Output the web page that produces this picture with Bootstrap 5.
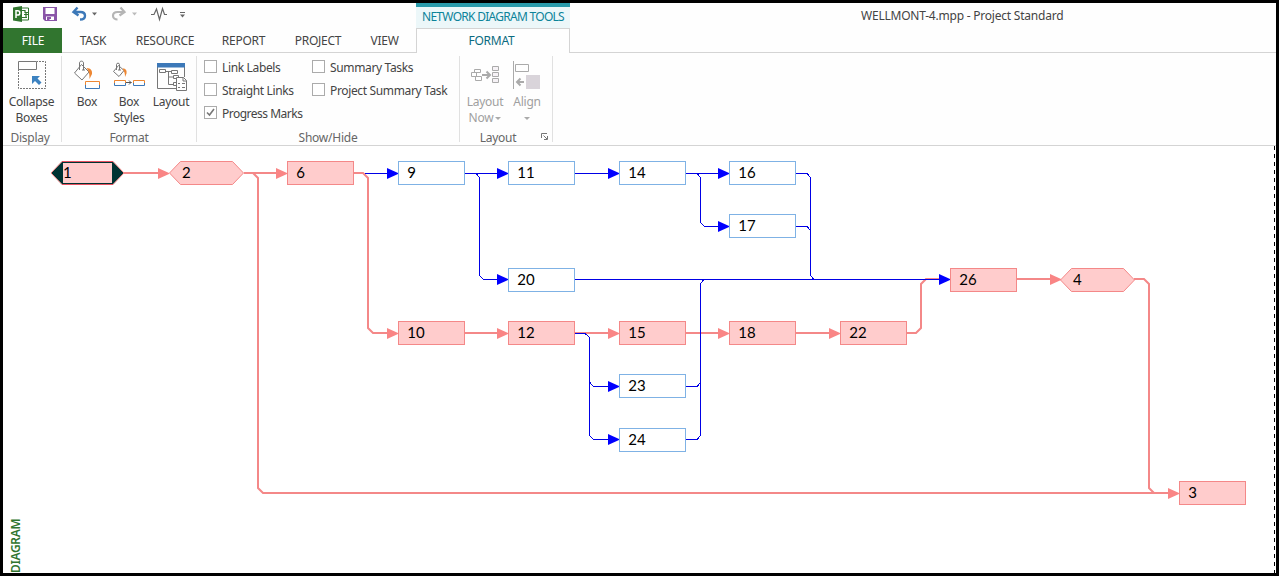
<!DOCTYPE html>
<html lang="en">
<head>
<meta charset="utf-8">
<meta name="viewport" content="width=device-width, initial-scale=1">
<title>WELLMONT-4.mpp - Project Standard</title>
<link rel="stylesheet" href="https://cdn.jsdelivr.net/npm/bootstrap@5.3.0/dist/css/bootstrap.min.css">
<style>
  body { font: 12px/16px "Noto Sans", "Open Sans", sans-serif; letter-spacing: -.25px; color: #444; background: #000; overflow: hidden; }
  svg { display: block; flex: none; }
  .app-frame { width: 1279px; height: 576px; border: 3px solid #000; background: #fefefe; }
  .title-row { height: 25px; }
  .quick-bar { width: 413px; }
  .tool-title { width: 154px; height: 25px; border-top: 4px solid #2a9bab; background: #ecf7f9; color: #0b8399; line-height: 19px; letter-spacing: -.72px; }
  .doc-title { margin-left: 291px; line-height: 25px; letter-spacing: -.22px; }
  .tab-row { height: 25px; line-height: 25px; }
  .tab-row .rtab { border-bottom: 1px solid #d4d4d4; text-align: center; flex: none; }
  .tab-row .rtab.file { width: 59px; background: #31752f; color: #fff; border-color: #31752f; padding-left: 1px; }
  .tab-row .rtab.active { width: 154px; border: 1px solid #d4d4d4; border-bottom: 0; color: #0b6b80; line-height: 24px; padding-right: 3px; }
  .w-task { width: 60px; padding-left: 2px; } .w-res { width: 86px; } .w-rep { width: 71px; }
  .w-proj { width: 78px; } .w-view { width: 59px; padding-right: 4px; }
  .ribbon { height: 93px; padding-top: 3px; border-bottom: 1px solid #d4d4d4; }
  .rgroup { height: 86px; border-right: 1px solid #e1e1e1; position: relative; flex: none; }
  .rgroup-name { color: #666; line-height: 18px; text-align: center; height: 16px; }
  .rgroup-body { height: 73px; }
  .big-btn { width: 42px; padding-top: 3px; text-align: center; white-space: nowrap; }
  .big-btn.wide { width: 46px; margin-right: 1px; }
  .big-btn .cap { margin-top: 3px; }
  .dim { color: #a0a0a0; }
  .opt { height: 23px; letter-spacing: -.35px; }
  .opt.tight { letter-spacing: -.5px; }
  .tick-box { width: 13px; height: 13px; border: 1px solid #ababab; background: #fff; margin: -1px 5px 1px 0; flex: none; }
  .caret { display: inline-block; border: 3px solid transparent; border-top-color: #aaa; border-bottom: 0; vertical-align: 2px; margin-left: 2px; }
  .launcher { position: absolute; right: 3px; bottom: 1px; }
  .canvas { position: relative; height: 427px; overflow: hidden; background: #fff; }
  .node { position: absolute; width: 67px; height: 24px; border: 1px solid #7fb2e5; background: #fff; color: #000; font: 15px/20px Lato, sans-serif; letter-spacing: .1px; padding-left: 8.2px; }
  .node.crit { border-color: #f48888; background: #ffcccc; }
  .node.hex { border: 0; background: none; line-height: 22px; padding-left: 9px; }
  .view-name { position: absolute; left: 5px; top: 373px; writing-mode: vertical-rl; transform: rotate(180deg); color: #31752f; line-height: 16px; height: 130px; text-align: right; font-weight: 600; letter-spacing: -.35px; }
</style>
</head>
<body>
<div class="app-frame">
  <div class="title-row d-flex">
    <div class="quick-bar">
      <svg width="190" height="25" viewBox="3 3 190 25" fill="none">
        <path d="M21 8h7.500v12H21z" fill="#fff" stroke="#31752f"/>
        <path d="M22 10.500h3v2h3M24 14.500h4M22 17.500h5M26 12v6" stroke="#31752f" stroke-width="1.200"/>
        <path d="M13 7.500 22 6v16l-9-1.500z" fill="#31752f"/>
        <path d="M16 18v-7.200h1.700a2 2 0 0 1 0 4.200H16" stroke="#fff" stroke-width="1.500"/>
        <path d="M43 7h14v14H45l-2-2z" fill="#8a55a8"/>
        <path d="M45.500 8h9v6h-9zM46 16.500h8V20h-8z" fill="#fff"/><path d="M47 17h4v2h-1.500v2H47z" fill="#8a55a8"/>
        <path d="M77.500 7.500 73.500 12l5 3.500M74 12h6.500c3 0 4.500 1.500 4.500 3.700s-2 3.800-5 3.800" stroke="#3c78b8" stroke-width="2.400"/>
        <path d="M92 12.500h5l-2.500 3z" fill="#666"/>
        <path d="M120.500 7.500 124.500 12l-5 3.500M124 12h-6.500c-3 0-4.500 1.500-4.500 3.700s2 3.800 4.500 3.800" stroke="#b5b5b5" stroke-width="2.200"/>
        <path d="M132 12.500h5l-2.500 3z" fill="#bbb"/>
        <path d="M151 14.500h3l2.500-5.500 3 10.500 3-11 2 6h2.500" stroke="#666" stroke-width="1.200"/>
        <path d="M180 12.500h5" stroke="#666"/><path d="M180 14.500h5l-2.500 3z" fill="#666"/>
      </svg>
    </div>
    <div class="tool-title text-center text-nowrap">NETWORK DIAGRAM TOOLS</div>
    <div class="doc-title text-nowrap">WELLMONT-4.mpp - Project Standard</div>
  </div>
  <div class="tab-row d-flex">
    <div class="rtab file">FILE</div>
    <div class="rtab w-task">TASK</div><div class="rtab w-res">RESOURCE</div><div class="rtab w-rep">REPORT</div>
    <div class="rtab w-proj">PROJECT</div><div class="rtab w-view">VIEW</div>
    <div class="rtab active">FORMAT</div>
    <div class="rtab flex-grow-1"></div>
  </div>
  <div class="ribbon d-flex">
    <div class="rgroup" style="width:59px">
      <div class="rgroup-body d-flex justify-content-center">
        <div class="big-btn wide">
          <svg class="mx-auto" width="32" height="32" viewBox="16 59 32 32" fill="none">
            <path d="M18.500 69v19.500h27v-27H37" stroke="#777" stroke-dasharray="2 1"/>
            <path d="M18.500 61.500h18v8h-18z" fill="#fff" stroke="#777"/>
            <path d="M32 76h8l-2.500 2.500 4 4-2.500 2.500-4-4L32 84z" fill="#3c82c0"/>
          </svg>
          <div class="cap">Collapse<br>Boxes</div>
        </div>
      </div>
      <div class="rgroup-name pe-1">Display</div>
    </div>
    <div class="rgroup" style="width:135px">
      <div class="rgroup-body d-flex ps-1">
        <div class="big-btn">
          <svg class="mx-auto" width="32" height="32" viewBox="71 59 32 32" fill="none">
            <path d="M81.500 64.500 89 72l-7 8-7.500-7z" stroke="#777" fill="#fff"/>
            <path d="M79.500 70v-7c0-2.500 4-2.500 4 0v7M82 70h3" stroke="#777"/>
            <path d="M86.500 68c4.500 0 6 3 5.500 6l-2.500 5c0-4 0-7-3-11z" fill="#ed8733"/>
            <path d="M85.500 85v-3.500h14V85" stroke="#ed8733"/><path d="M85.500 85v3.500h14V85" stroke="#3c78b8"/>
          </svg>
          <div class="cap">Box</div>
        </div>
        <div class="big-btn">
          <svg class="mx-auto" width="34" height="32" viewBox="112 59 34 32" fill="none">
            <path d="M118.500 65.500 124 70.500l-5 6-5.500-5z" stroke="#777" fill="#fff"/>
            <path d="M116.500 70v-5.500c0-1.800 3-1.800 3 0V70M118 70h3" stroke="#777"/>
            <path d="M122.500 68.500c3.500 0 4.500 2 4 5l-1.500 3.500c0-3-.5-5.500-2.500-8.500z" fill="#ed8733"/>
            <path d="M114.500 83v-2.500h11V83M133.500 83v-2.500h11V83" stroke="#ed8733"/>
            <path d="M114.500 83v2.500h11V83M133.500 83v2.500h11V83" stroke="#3c78b8"/>
            <path d="M126 82.500h5.500M129 80.500l2 2-2 2" stroke="#555"/>
          </svg>
          <div class="cap">Box<br>Styles</div>
        </div>
        <div class="big-btn">
          <svg class="mx-auto" width="32" height="32" viewBox="155 59 32 32" fill="none">
            <path d="M157.500 64v24.500h18.500M184.500 67v10" stroke="#777"/><path d="M157 63h28v4.500h-28z" fill="#3c78b8"/>
            <path d="M159.500 69.500h6v3h-6zM171.500 70.500h6v3h-6zM173.500 75.500h5v3h-5zM173.500 82.500h3v3h-3zM165.500 71.500h6M168.500 71.500v13h5M168.500 77h5" stroke="#777"/>
            <path d="M176.500 77.500h7l3 3v10h-10z" fill="#fff" stroke="#777"/><path d="M183 77.500v3.500h3.500M178 83.500h2M182 83.500h3M178 87.500h2M182 87.500h3" stroke="#777"/>
          </svg>
          <div class="cap">Layout</div>
        </div>
      </div>
      <div class="rgroup-name">Format</div>
    </div>
    <div class="rgroup" style="width:263px">
      <div class="rgroup-body d-flex text-nowrap" style="padding-left:7px">
        <div style="width:108px">
          <div class="opt d-flex align-items-center"><span class="tick-box"></span>Link Labels</div>
          <div class="opt d-flex align-items-center"><span class="tick-box"></span>Straight Links</div>
          <div class="opt tight d-flex align-items-center"><span class="tick-box"><svg width="11" height="11" fill="none"><path d="M2 5.500 4.500 8 9 2" stroke="#777" stroke-width="1.600"/></svg></span>Progress Marks</div>
        </div>
        <div>
          <div class="opt d-flex align-items-center"><span class="tick-box"></span>Summary Tasks</div>
          <div class="opt d-flex align-items-center"><span class="tick-box"></span>Project Summary Task</div>
        </div>
      </div>
      <div class="rgroup-name">Show/Hide</div>
    </div>
    <div class="rgroup" style="width:93px">
      <div class="rgroup-body d-flex ps-1 dim">
        <div class="big-btn">
          <svg class="mx-auto" width="32" height="32" viewBox="469 59 32 32" fill="none" stroke="#aaa">
            <path d="M474.500 69.500h6v3h-6zM471.500 72.500h5v4h-5zM475.500 76.500h6v4h-6z" fill="#fff"/>
            <path d="M492.500 66.500h6v4h-6zM492.500 72.500h6v4h-6zM492.500 78.500h6v4h-6z" fill="#f6f2f6"/>
            <path d="M482 75h8M486.500 71.500 490 75l-3.500 3.500" stroke-width="2"/>
          </svg>
          <div class="cap">Layout<br>Now<span class="caret"></span></div>
        </div>
        <div class="big-btn">
          <svg class="mx-auto" width="32" height="32" viewBox="511 59 32 32" fill="none">
            <path d="M513.500 61v28M515.500 64.500h13v7h-13z" stroke="#aaa"/><path d="M526 75h14v14h-14z" fill="#d9d4da"/>
            <path d="M524 82h-7M520.500 78.500 517 82l3.500 3.500" stroke="#aaa" stroke-width="2"/>
          </svg>
          <div class="cap">Align<br><span class="caret ms-0"></span></div>
        </div>
      </div>
      <div class="rgroup-name" style="padding-right:16px">Layout</div>
      <svg class="launcher" width="9" height="9" fill="none" stroke="#777"><path d="M1.500 6V1.500H7M3.500 3.500 7 7M7.500 4v3.500H4"/></svg>
    </div>
  </div>
  <div class="canvas">
    <svg width="1273" height="427" viewBox="3 146 1273 427" fill="none">
      <defs>
        <path id="tip" d="M-11-5.500 0-.5V.5L-11 5.500z"/>
      </defs>
      <g stroke="#f48888" stroke-width="2">
        <path d="M124 173h40M244 173h38M253 173l5 5v310l5 5h911M354 173h9l5 5v150l5 5h20M465 333h38M575 333h39M686 333h38M796 333h39M907 333h9l5-5v-44l5-5h14M1017 279h38M1134 279h10l5 5v204l5 5"/>
      </g>
      <g stroke="#0000e6" shape-rendering="crispEdges">
        <path d="M365 173.500h25M465 173.500h35M476 173.500l3.500 4v98l4 4H500M575 173.500h36M686 173.500h35M697 173.500l3.500 4v45l4 4H721M796 173.500h11l3.500 4v98l3.500 4M796 226.500h11l3.500 4M575 279.500h366M575 333.500h10l4.500 4v98l4 4H611M589.500 382l4 4.500H611M686 386.500h11l3.500-4M686 439.500h11l3.500-4v-152l3.500-4"/>
      </g>
      <g fill="#f98585">
        <use href="#tip" x="169" y="173.500"/><use href="#tip" x="287" y="173.500"/><use href="#tip" x="398" y="333.500"/><use href="#tip" x="508" y="333.500"/><use href="#tip" x="619" y="333.500"/><use href="#tip" x="729" y="333.500"/><use href="#tip" x="840" y="333.500"/><use href="#tip" x="1061" y="279.500"/><use href="#tip" x="1179" y="493.500"/>
      </g>
      <g fill="#0000ff">
        <use href="#tip" x="398" y="173.500"/><use href="#tip" x="508" y="173.500"/><use href="#tip" x="619" y="173.500"/><use href="#tip" x="729" y="173.500"/><use href="#tip" x="729" y="226.500"/><use href="#tip" x="508" y="279.500"/><use href="#tip" x="950" y="279.500"/><use href="#tip" x="619" y="386.500"/><use href="#tip" x="619" y="439.500"/>
      </g>
      <g fill="#ffcccc" stroke="#f48888">
        <path d="M169.500 173 180.500 161.500h52L243.500 173 232.500 184.500h-52zM1060.500 280 1071.500 268.500h52L1134.500 280 1123.500 291.500h-52z"/>
        <path d="M51 173 62 161.500h51L124 173 113 184.500H62z" fill="#033"/>
        <path d="M62 161.500h51M62 184.500h51" stroke="#e85060"/>
      </g>
      <path d="M63 163h49v20H63z" fill="#ffcccc"/>
      <path d="M1274.500 146v427" stroke="#000" stroke-dasharray="4 4"/>
    </svg>
    <div class="node hex" style="left:51px;top:15px">1</div>
    <div class="node hex" style="left:170px;top:15px">2</div>
    <div class="node crit" style="left:284px;top:15px">6</div>
    <div class="node" style="left:395px;top:15px">9</div>
    <div class="node" style="left:505px;top:15px">11</div>
    <div class="node" style="left:616px;top:15px">14</div>
    <div class="node" style="left:726px;top:15px">16</div>
    <div class="node" style="left:726px;top:68px">17</div>
    <div class="node" style="left:505px;top:122px">20</div>
    <div class="node crit" style="left:947px;top:122px">26</div>
    <div class="node hex" style="left:1061px;top:122px">4</div>
    <div class="node crit" style="left:395px;top:175px">10</div>
    <div class="node crit" style="left:505px;top:175px">12</div>
    <div class="node crit" style="left:616px;top:175px">15</div>
    <div class="node crit" style="left:726px;top:175px">18</div>
    <div class="node crit" style="left:837px;top:175px">22</div>
    <div class="node" style="left:616px;top:228px">23</div>
    <div class="node" style="left:616px;top:282px">24</div>
    <div class="node crit" style="left:1176px;top:335px">3</div>
    <div class="view-name">DIAGRAM</div>
  </div>
</div>
<script src="https://cdn.jsdelivr.net/npm/bootstrap@5.3.0/dist/js/bootstrap.bundle.min.js"></script>
</body>
</html>
